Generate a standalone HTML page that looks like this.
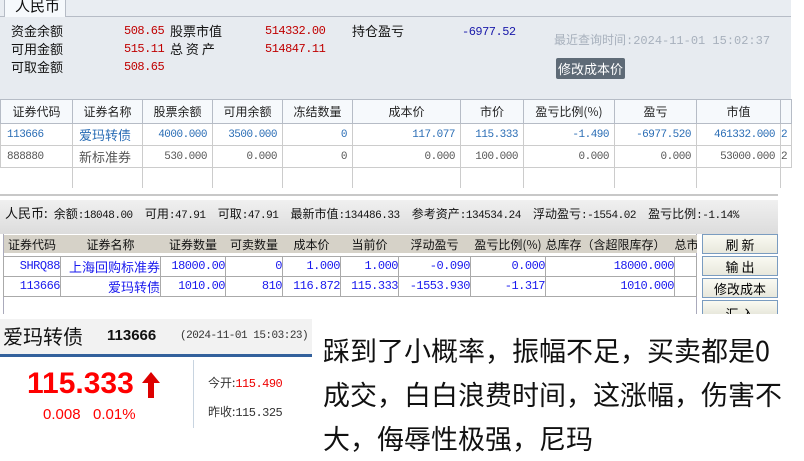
<!DOCTYPE html>
<html><head><meta charset="utf-8"><style>
*{margin:0;padding:0;box-sizing:border-box}
body{width:804px;height:461px;background:#fff;position:relative;overflow:hidden;font-family:"Liberation Sans","Noto Sans CJK SC",sans-serif}
.a{position:absolute;white-space:nowrap}
.m{font-family:"Liberation Mono","Noto Sans CJK SC",monospace;font-size:11px;letter-spacing:-0.5px}
.cj{font-family:"Noto Sans CJK SC","WenQuanYi Zen Hei",sans-serif;letter-spacing:0}
table{border-collapse:collapse;position:absolute;table-layout:fixed}
td{white-space:nowrap;overflow:hidden}
.b td{border:1px solid #ccc}
.r{text-align:right;padding-right:5px}
.h td{border:1px solid #b6bcc6;text-align:center}
.t td{border:1px solid #aaa;text-align:right}
</style></head><body>
<div class="a" style="left:0;top:0;width:791px;height:186px;background:#e7ebf0"></div>
<div class="a" style="left:0;top:0;width:791px;height:17px;background:#e9edf2;border-bottom:1px solid #b6bcc6"></div>
<div class="a cj" style="left:4px;top:-3px;width:62px;height:20px;background:#f6f9fc;border:1px solid #b6bcc6;border-top:none;border-bottom:none;font-size:15px;padding-left:10px;line-height:18px;color:#111">人民币</div>
<div class="a cj" style="left:11px;top:22px;font-size:13px;line-height:18px;color:#111">资金余额<br>可用金额<br>可取金额</div>
<div class="a m" style="left:124px;top:22px;line-height:18px;color:#c00000;font-size:12px">508.65<br>515.11<br>508.65</div>
<div class="a cj" style="left:170px;top:22px;font-size:13px;line-height:18px;color:#111">股票市值<br>总&nbsp;资&nbsp;产</div>
<div class="a m" style="left:265px;top:22px;line-height:18px;color:#c00000;font-size:12px">514332.00<br>514847.11</div>
<div class="a cj" style="left:352px;top:22px;font-size:13px;line-height:18px;color:#111">持仓盈亏</div>
<div class="a m" style="left:462px;top:23px;line-height:18px;color:#1a1aaa;font-size:12px">-6977.52</div>
<div class="a m" style="left:554px;top:32px;line-height:16px;color:#a7b0bc;font-size:12px;letter-spacing:0"><span class="cj" style="font-size:12px">最近查询时间</span>:2024-11-01 15:02:37</div>
<div class="a cj" style="left:556px;top:58px;width:69px;height:21px;background:#5e6a76;border-radius:2px;color:#fff;font-size:13px;line-height:21px;text-align:center">修改成本价</div>
<div class="a" style="left:0;top:99px;width:791px;height:87px;background:#fff"></div>
<table style="left:0;top:99px;width:791px;font-size:12px;color:#222">
<colgroup><col width="72"><col width="70"><col width="70"><col width="70"><col width="70"><col width="108"><col width="63"><col width="91"><col width="82"><col width="84"><col width="11"></colgroup>
<tr style="height:24px;background:#f6f9fc" class="cj h"><td>证券代码</td><td>证券名称</td><td>股票余额</td><td>可用余额</td><td>冻结数量</td><td>成本价</td><td>市价</td><td>盈亏比例(%)</td><td>盈亏</td><td>市值</td><td></td></tr>
<tr style="height:22px;color:#2a6db5" class="m b"><td style="padding-left:6px">113666</td><td class="cj" style="padding-left:6px;font-size:13px">爱玛转债</td><td class="r">4000.000</td><td class="r">3500.000</td><td class="r">0</td><td class="r">117.077</td><td class="r">115.333</td><td class="r">-1.490</td><td class="r">-6977.520</td><td class="r">461332.000</td><td>2</td></tr>
<tr style="height:22px;color:#555" class="m b"><td style="padding-left:6px">888880</td><td class="cj" style="padding-left:6px;font-size:13px">新标准券</td><td class="r">530.000</td><td class="r">0.000</td><td class="r">0</td><td class="r">0.000</td><td class="r">100.000</td><td class="r">0.000</td><td class="r">0.000</td><td class="r">53000.000</td><td>2</td></tr>
<tr style="height:20px"><td style="border-right:1px solid #ccc"></td><td style="border-right:1px solid #ccc"></td><td style="border-right:1px solid #ccc"></td><td style="border-right:1px solid #ccc"></td><td style="border-right:1px solid #ccc"></td><td style="border-right:1px solid #ccc"></td><td style="border-right:1px solid #ccc"></td><td style="border-right:1px solid #ccc"></td><td style="border-right:1px solid #ccc"></td><td style="border-right:1px solid #ccc"></td><td></td></tr>
</table>
<div class="a" style="left:0;top:194px;width:778px;height:120px;background:#fff;border-top:2px solid #c8c8c8"></div>
<div class="a" style="left:0;top:200px;width:778px;height:34px;background:linear-gradient(#f0f0f0,#dcdcdc)"></div>
<div class="a m" style="left:5px;top:204px;line-height:18px;color:#111"><span class="cj" style="font-size:13px">人民币:</span> <span class="cj" style="font-size:12px">余额</span>:18048.00&nbsp; <span class="cj" style="font-size:12px">可用</span>:47.91&nbsp; <span class="cj" style="font-size:12px">可取</span>:47.91&nbsp; <span class="cj" style="font-size:12px">最新市值</span>:134486.33&nbsp; <span class="cj" style="font-size:12px">参考资产</span>:134534.24&nbsp; <span class="cj" style="font-size:12px">浮动盈亏</span>:-1554.02&nbsp; <span class="cj" style="font-size:12px">盈亏比例</span>:-1.14%</div>
<div class="a" style="left:3px;top:234px;width:694px;height:80px;border-right:1px solid #aab;border-left:1px solid #aab"></div>
<table style="left:3px;top:235px;width:693px;font-size:12px;color:#1a1aee">
<colgroup><col width="57"><col width="100"><col width="65"><col width="57"><col width="58"><col width="58"><col width="72"><col width="75"><col width="129"><col width="22"></colgroup>
<tr style="height:18px;background:#d6d2c8;color:#111" class="cj"><td style="text-align:center">证券代码</td><td style="text-align:center">证券名称</td><td style="text-align:center">证券数量</td><td style="text-align:center">可卖数量</td><td style="text-align:center">成本价</td><td style="text-align:center">当前价</td><td style="text-align:center">浮动盈亏</td><td style="text-align:center">盈亏比例(%)</td><td>总库存（含超限库存）</td><td>总市</td></tr>
<tr style="height:3px"><td colspan="10"></td></tr>
<tr style="height:17px" class="m t"><td style="font-size:12px">SHRQ88</td><td class="cj" style="font-size:13px">上海回购标准券</td><td style="font-size:12px">18000.00</td><td style="font-size:12px">0</td><td style="font-size:12px">1.000</td><td style="font-size:12px">1.000</td><td style="font-size:12px">-0.090</td><td style="font-size:12px">0.000</td><td style="font-size:12px">18000.000</td><td></td></tr>
<tr style="height:17px" class="m t"><td style="font-size:12px">113666</td><td class="cj" style="font-size:13px">爱玛转债</td><td style="font-size:12px">1010.00</td><td style="font-size:12px">810</td><td style="font-size:12px">116.872</td><td style="font-size:12px">115.333</td><td style="font-size:12px">-1553.930</td><td style="font-size:12px">-1.317</td><td style="font-size:12px">1010.000</td><td></td></tr>
</table>
<div class="a cj" style="left:702px;top:234px;width:76px;height:20px;background:linear-gradient(#fafaf2,#e8e8dc);border:1px solid #7a9cc0;font-size:13px;text-align:center;line-height:19px">刷 新</div>
<div class="a cj" style="left:702px;top:256px;width:76px;height:20px;background:linear-gradient(#fafaf2,#e8e8dc);border:1px solid #7a9cc0;font-size:13px;text-align:center;line-height:19px">输 出</div>
<div class="a cj" style="left:702px;top:278px;width:76px;height:20px;background:linear-gradient(#fafaf2,#e8e8dc);border:1px solid #7a9cc0;font-size:13px;text-align:center;line-height:19px">修改成本</div>
<div class="a cj" style="left:702px;top:300px;width:76px;height:14px;background:linear-gradient(#fafaf2,#e8e8dc);border:1px solid #7a9cc0;border-bottom:none;font-size:13px;text-align:center;line-height:26px;overflow:hidden">汇 入</div>
<div class="a" style="left:0;top:319px;width:312px;height:38px;background:#f2f2f2;border-bottom:3px solid #33619c"></div>
<div class="a cj" style="left:3px;top:322px;font-size:20px;line-height:28px;color:#111">爱玛转债</div>
<div class="a" style="left:107px;top:326px;font-size:15px;font-weight:bold;line-height:20px;color:#111">113666</div>
<div class="a m" style="left:180px;top:328px;line-height:16px;color:#333">(2024-11-01 15:03:23)</div>
<div class="a" style="left:193px;top:360px;width:1px;height:68px;background:#c8d4e0"></div>
<div class="a" style="left:27px;top:366px;font-size:30px;font-weight:bold;line-height:36px;color:#f00">115.333</div>
<svg class="a" style="left:142px;top:372px" width="18" height="26" viewBox="0 0 18 26"><path d="M9 0L18 11H12V26H6V11H0Z" fill="#d00"/></svg>
<div class="a" style="left:43px;top:405px;font-size:15px;line-height:20px;color:#f00">0.008&nbsp;&nbsp; 0.01%</div>
<div class="a cj" style="left:208px;top:374px;font-size:12px;line-height:18px;color:#333">今开:<span class="m" style="color:#e00;font-size:12px">115.490</span></div>
<div class="a cj" style="left:208px;top:403px;font-size:12px;line-height:18px;color:#333">昨收:<span class="m" style="font-size:12px">115.325</span></div>
<div class="a cj" style="left:323px;top:328px;font-size:27px;line-height:44px;color:#111">踩到了小概率，振幅不足，买卖都是0<br>成交，白白浪费时间，这涨幅，伤害不<br>大，侮辱性极强，尼玛</div>
</body></html>
